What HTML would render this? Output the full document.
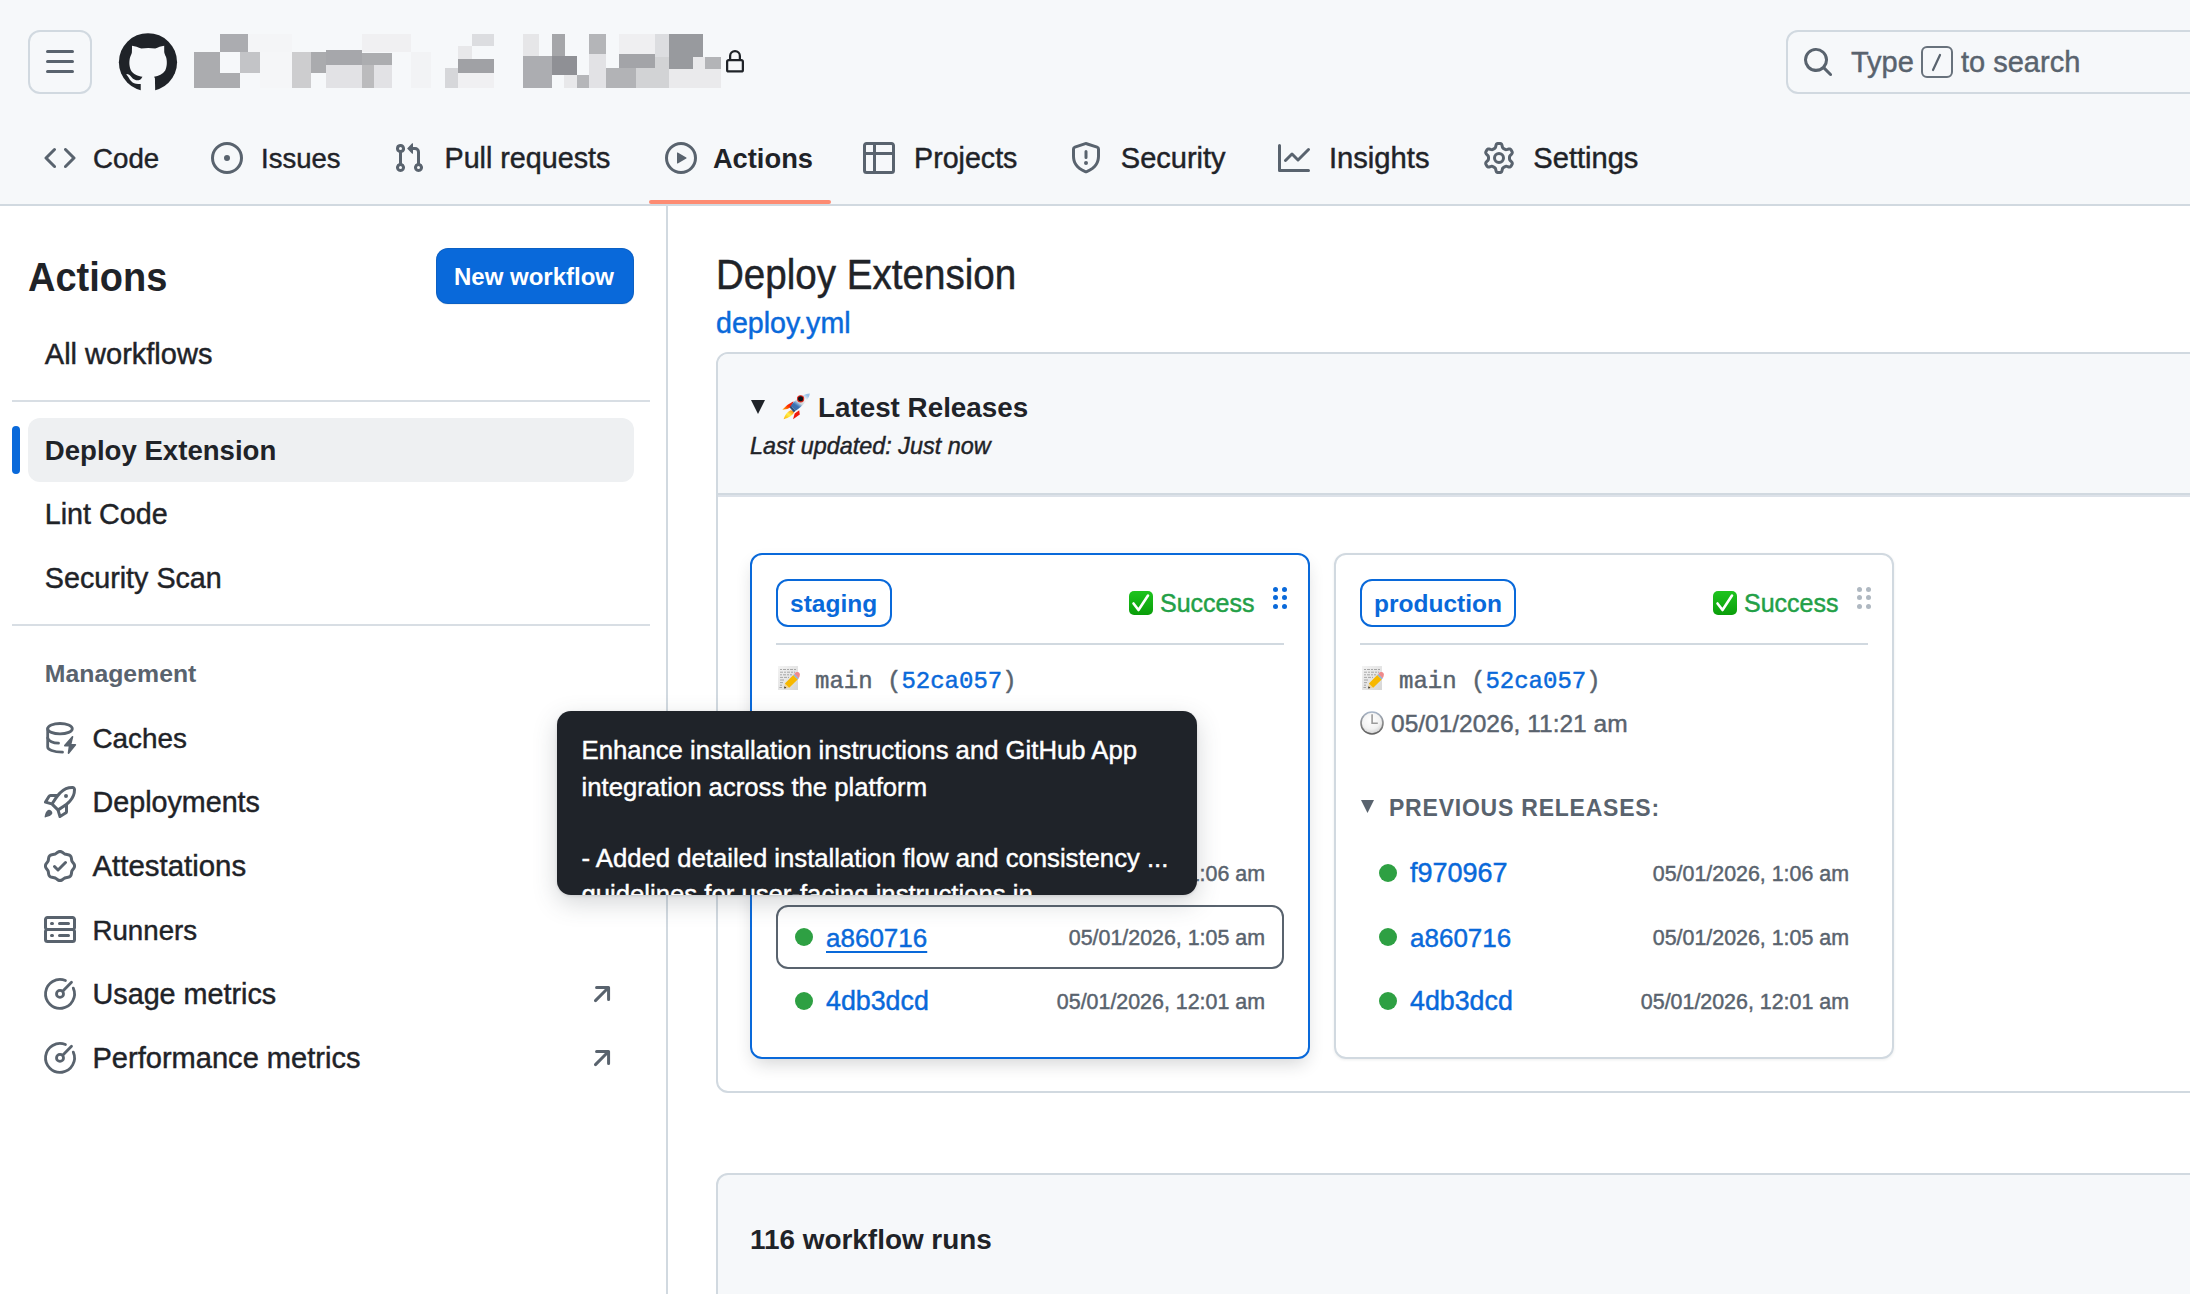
<!DOCTYPE html>
<html><head><meta charset="utf-8"><title>Actions</title>
<style>
html,body{margin:0;padding:0;}
body{width:2190px;height:1294px;overflow:hidden;position:relative;background:#fff;font-family:"Liberation Sans", sans-serif;}
.t{position:absolute;white-space:pre;-webkit-text-stroke:0.45px currentColor;}
svg{display:block}
</style></head><body>
<div style="position:absolute;left:0px;top:0px;width:2190px;height:204px;background:#f6f8fa"></div>
<div style="position:absolute;left:0px;top:204px;width:2190px;height:2px;background:#d1d9e0"></div>
<div style="position:absolute;left:28px;top:30px;width:60px;height:60px;border:2px solid #d1d9e0;border-radius:12px"></div>
<svg style="position:absolute;left:44px;top:46px" width="32" height="32" viewBox="0 0 16 16" fill="#59636e"><path d="M1 2.75A.75.75 0 0 1 1.75 2h12.5a.75.75 0 0 1 0 1.5H1.75A.75.75 0 0 1 1 2.75Zm0 5A.75.75 0 0 1 1.75 7h12.5a.75.75 0 0 1 0 1.5H1.75A.75.75 0 0 1 1 7.75ZM1.75 12h12.5a.75.75 0 0 1 0 1.5H1.75a.75.75 0 0 1 0-1.5Z"/></svg>
<svg style="position:absolute;left:110px;top:25.5px" width="80" height="75" viewBox="0 0 1380 1294">
<circle cx="655" cy="625" r="502" fill="#1f2328"/>
<path fill="#f6f8fa" d="M530 1140 L530 1000 C470 1000 420 995 390 975 C350 950 330 900 300 860 C290 845 280 835 285 828 C300 822 330 835 350 860 C380 900 410 930 450 935 C490 940 520 930 535 915 L560 875 C480 860 400 830 365 770 C330 710 325 600 350 530 C365 490 380 470 378 440 L380 340 C430 345 490 370 540 388 C620 375 700 375 780 388 C830 370 880 345 935 340 L935 440 C935 470 950 500 965 530 C990 600 985 710 950 770 C910 830 840 860 760 875 L775 900 L780 1140 Z"/>
</svg>
<div style="position:absolute;left:220px;top:34px;width:28px;height:18px;background:#abacb0"></div>
<div style="position:absolute;left:194px;top:52px;width:26px;height:36px;background:#abacaf"></div>
<div style="position:absolute;left:220px;top:73px;width:20px;height:15px;background:#abacaf"></div>
<div style="position:absolute;left:240px;top:52px;width:20px;height:21px;background:#c3c4c7"></div>
<div style="position:absolute;left:260px;top:52px;width:32px;height:36px;background:#f5f6f8"></div>
<div style="position:absolute;left:248px;top:34px;width:44px;height:18px;background:#f4f5f7"></div>
<div style="position:absolute;left:292px;top:52px;width:19px;height:36px;background:#cdcdcf"></div>
<div style="position:absolute;left:311px;top:52px;width:15px;height:21px;background:#aaabae"></div>
<div style="position:absolute;left:326px;top:50px;width:36px;height:15px;background:#a6a7ab"></div>
<div style="position:absolute;left:362px;top:53px;width:30px;height:12px;background:#acadb0"></div>
<div style="position:absolute;left:326px;top:65px;width:36px;height:23px;background:#e2e2e5"></div>
<div style="position:absolute;left:362px;top:65px;width:12px;height:23px;background:#bbbbbd"></div>
<div style="position:absolute;left:374px;top:65px;width:18px;height:23px;background:#e2e2e5"></div>
<div style="position:absolute;left:362px;top:34px;width:49px;height:18px;background:#f0f0f2"></div>
<div style="position:absolute;left:411px;top:52px;width:20px;height:36px;background:#f2f3f5"></div>
<div style="position:absolute;left:472px;top:34px;width:22px;height:12px;background:#dcdde0"></div>
<div style="position:absolute;left:458px;top:46px;width:14px;height:13px;background:#e8e8ea"></div>
<div style="position:absolute;left:458px;top:59px;width:36px;height:14px;background:#a0a1a5"></div>
<div style="position:absolute;left:445px;top:68px;width:13px;height:20px;background:#d6d7da"></div>
<div style="position:absolute;left:458px;top:73px;width:36px;height:15px;background:#f0f0f2"></div>
<div style="position:absolute;left:523px;top:34px;width:16px;height:22px;background:#e6e6e8"></div>
<div style="position:absolute;left:552px;top:34px;width:13px;height:22px;background:#a5a6a9"></div>
<div style="position:absolute;left:523px;top:56px;width:29px;height:32px;background:#acadb1"></div>
<div style="position:absolute;left:552px;top:56px;width:25px;height:19px;background:#8f9095"></div>
<div style="position:absolute;left:564px;top:75px;width:13px;height:13px;background:#e8e8ea"></div>
<div style="position:absolute;left:577px;top:75px;width:12px;height:13px;background:#b5b6b9"></div>
<div style="position:absolute;left:589px;top:34px;width:17px;height:20px;background:#b4b5b8"></div>
<div style="position:absolute;left:589px;top:54px;width:17px;height:34px;background:#e2e2e5"></div>
<div style="position:absolute;left:619px;top:34px;width:36px;height:20px;background:#efeff1"></div>
<div style="position:absolute;left:619px;top:54px;width:36px;height:14px;background:#a3a4a8"></div>
<div style="position:absolute;left:606px;top:68px;width:30px;height:20px;background:#b2b3b6"></div>
<div style="position:absolute;left:636px;top:68px;width:33px;height:20px;background:#d2d3d5"></div>
<div style="position:absolute;left:655px;top:57px;width:14px;height:11px;background:#d2d3d5"></div>
<div style="position:absolute;left:655px;top:34px;width:14px;height:23px;background:#dcdde0"></div>
<div style="position:absolute;left:669px;top:34px;width:34px;height:35px;background:#989a9e"></div>
<div style="position:absolute;left:693px;top:57px;width:12px;height:12px;background:#e9e9eb"></div>
<div style="position:absolute;left:705px;top:57px;width:16px;height:12px;background:#b3b4b7"></div>
<div style="position:absolute;left:669px;top:69px;width:52px;height:19px;background:#eaeaec"></div>
<svg style="position:absolute;left:723px;top:50px" width="24" height="24" viewBox="0 0 16 16" fill="#1f2328"><path d="M4 4a4 4 0 0 1 8 0v2h.25c.966 0 1.75.784 1.75 1.75v5.5A1.75 1.75 0 0 1 12.25 15h-8.5A1.75 1.75 0 0 1 2 13.25v-5.5C2 6.784 2.784 6 3.75 6H4Zm8.25 3.5h-8.5a.25.25 0 0 0-.25.25v5.5c0 .138.112.25.25.25h8.5a.25.25 0 0 0 .25-.25v-5.5a.25.25 0 0 0-.25-.25ZM10.5 6V4a2.5 2.5 0 1 0-5 0v2Z"/></svg>
<div style="position:absolute;left:1786px;top:30px;width:420px;height:60px;border:2px solid #d1d9e0;border-radius:12px;background:#f6f8fa"></div>
<svg style="position:absolute;left:1802px;top:46px" width="32" height="32" viewBox="0 0 16 16" fill="#59636e"><path d="M10.68 11.74a6 6 0 0 1-7.922-8.982 6 6 0 0 1 8.982 7.922l3.04 3.04a.749.749 0 0 1-.326 1.275.749.749 0 0 1-.734-.215ZM11.5 7a4.499 4.499 0 1 0-8.997 0A4.499 4.499 0 0 0 11.5 7Z"/></svg>
<div class="t" style="left:1851px;top:44.50px;font-size:29px;line-height:35px;font-weight:400;color:#59636e;font-style:normal;font-family:'Liberation Sans', sans-serif;">Type</div>
<div style="position:absolute;left:1921px;top:46px;width:28px;height:28px;border:2px solid #59636e;border-radius:6px;opacity:.9"></div>
<div class="t" style="left:1961px;top:44.50px;font-size:29px;line-height:35px;font-weight:400;color:#59636e;font-style:normal;font-family:'Liberation Sans', sans-serif;">to search</div>
<svg style="position:absolute;left:1921px;top:46px" width="32" height="32"><line x1="19" y1="9" x2="12" y2="24" stroke="#59636e" stroke-width="2.2" stroke-linecap="round"/></svg>
<svg style="position:absolute;left:44px;top:142px" width="32" height="32" viewBox="0 0 16 16" fill="#59636e"><path d="m11.28 3.22 4.25 4.25a.75.75 0 0 1 0 1.06l-4.25 4.25a.749.749 0 0 1-1.275-.326.749.749 0 0 1 .215-.734L13.94 8l-3.72-3.72a.749.749 0 0 1 .326-1.275.749.749 0 0 1 .734.215Zm-6.56 0a.751.751 0 0 1 1.042.018.751.751 0 0 1 .018 1.042L2.06 8l3.72 3.72a.749.749 0 0 1-.326 1.275.749.749 0 0 1-.734-.215L.47 8.53a.75.75 0 0 1 0-1.06Z"/></svg>
<div class="t" style="left:93.1px;top:141.50px;font-size:27.65px;line-height:34px;font-weight:400;color:#1f2328;font-style:normal;font-family:'Liberation Sans', sans-serif;">Code</div>
<svg style="position:absolute;left:211px;top:142px" width="32" height="32" viewBox="0 0 16 16" fill="#59636e"><path d="M8 9.5a1.5 1.5 0 1 0 0-3 1.5 1.5 0 0 0 0 3Z M8 0a8 8 0 1 1 0 16A8 8 0 0 1 8 0ZM1.5 8a6.5 6.5 0 1 0 13 0 6.5 6.5 0 0 0-13 0Z"/></svg>
<div class="t" style="left:261.0px;top:142.00px;font-size:27.5px;line-height:33px;font-weight:400;color:#1f2328;font-style:normal;font-family:'Liberation Sans', sans-serif;">Issues</div>
<svg style="position:absolute;left:393px;top:142px" width="32" height="32" viewBox="0 0 16 16" fill="#59636e"><path d="M1.5 3.25a2.25 2.25 0 1 1 3 2.122v5.256a2.251 2.251 0 1 1-1.5 0V5.372A2.25 2.25 0 0 1 1.5 3.25Zm5.677-.177L9.573.677A.25.25 0 0 1 10 .854V2.5h1A2.5 2.5 0 0 1 13.5 5v5.628a2.251 2.251 0 1 1-1.5 0V5a1 1 0 0 0-1-1h-1v1.646a.25.25 0 0 1-.427.177L7.177 3.427a.25.25 0 0 1 0-.354ZM3.75 2.5a.75.75 0 1 0 0 1.5.75.75 0 0 0 0-1.5Zm0 9.5a.75.75 0 1 0 0 1.5.75.75 0 0 0 0-1.5Zm8.25.75a.75.75 0 1 0 1.5 0 .75.75 0 0 0-1.5 0Z"/></svg>
<div class="t" style="left:444.5px;top:140.50px;font-size:28.7px;line-height:35px;font-weight:400;color:#1f2328;font-style:normal;font-family:'Liberation Sans', sans-serif;">Pull requests</div>
<svg style="position:absolute;left:665px;top:142px" width="32" height="32" viewBox="0 0 16 16" fill="#59636e"><path d="M8 0a8 8 0 1 1 0 16A8 8 0 0 1 8 0ZM1.5 8a6.5 6.5 0 1 0 13 0 6.5 6.5 0 0 0-13 0Zm4.879-2.773 4.264 2.559a.25.25 0 0 1 0 .428l-4.264 2.559A.25.25 0 0 1 6 10.559V5.442a.25.25 0 0 1 .379-.215Z"/></svg>
<div class="t" style="left:712.9px;top:142.00px;font-size:27.3px;line-height:33px;font-weight:700;color:#1f2328;font-style:normal;font-family:'Liberation Sans', sans-serif;-webkit-text-stroke:0;">Actions</div>
<svg style="position:absolute;left:863px;top:142px" width="32" height="32" viewBox="0 0 16 16" fill="#59636e"><path d="M0 1.75C0 .784.784 0 1.75 0h12.5C15.216 0 16 .784 16 1.75v12.5A1.75 1.75 0 0 1 14.25 16H1.75A1.75 1.75 0 0 1 0 14.25ZM6.5 6.5v8h7.75a.25.25 0 0 0 .25-.25V6.5Zm8-1.5V1.75a.25.25 0 0 0-.25-.25H6.5V5Zm-13 1.5v7.75c0 .138.112.25.25.25H5v-8ZM5 5V1.5H1.75a.25.25 0 0 0-.25.25V5Z"/></svg>
<div class="t" style="left:914.1px;top:140.50px;font-size:28.6px;line-height:35px;font-weight:400;color:#1f2328;font-style:normal;font-family:'Liberation Sans', sans-serif;">Projects</div>
<svg style="position:absolute;left:1070px;top:142px" width="32" height="32" viewBox="0 0 16 16" fill="#59636e"><path d="M7.467.133a1.748 1.748 0 0 1 1.066 0l5.25 1.68A1.75 1.75 0 0 1 15 3.48V7c0 1.566-.32 3.182-1.303 4.682-.983 1.498-2.585 2.813-5.032 3.855a1.697 1.697 0 0 1-1.33 0c-2.447-1.042-4.049-2.357-5.032-3.855C1.32 10.182 1 8.566 1 7V3.48a1.755 1.755 0 0 1 1.217-1.667Zm.61 1.429a.25.25 0 0 0-.153 0l-5.25 1.68a.25.25 0 0 0-.174.238V7c0 1.358.275 2.666 1.057 3.86.784 1.194 2.121 2.34 4.366 3.297a.196.196 0 0 0 .154 0c2.245-.956 3.582-2.104 4.366-3.298C13.225 9.666 13.5 8.36 13.5 7V3.48a.251.251 0 0 0-.174-.237l-5.25-1.68ZM8.75 4.75v3a.75.75 0 0 1-1.5 0v-3a.75.75 0 0 1 1.5 0ZM9 10.5a1 1 0 1 1-2 0 1 1 0 0 1 2 0Z"/></svg>
<div class="t" style="left:1120.8px;top:140.50px;font-size:29px;line-height:35px;font-weight:400;color:#1f2328;font-style:normal;font-family:'Liberation Sans', sans-serif;">Security</div>
<svg style="position:absolute;left:1278px;top:142px" width="32" height="32" viewBox="0 0 16 16" fill="#59636e"><path d="M1.5 1.75V13.5h13.75a.75.75 0 0 1 0 1.5H.75a.75.75 0 0 1-.75-.75V1.75a.75.75 0 0 1 1.5 0Zm14.28 2.53-5.25 5.25a.75.75 0 0 1-1.06 0L7 7.06 4.28 9.78a.751.751 0 0 1-1.042-.018.751.751 0 0 1-.018-1.042l3.25-3.25a.75.75 0 0 1 1.06 0L10 7.94l4.72-4.72a.751.751 0 0 1 1.042.018.751.751 0 0 1 .018 1.042Z"/></svg>
<div class="t" style="left:1328.9px;top:140.00px;font-size:29.2px;line-height:36px;font-weight:400;color:#1f2328;font-style:normal;font-family:'Liberation Sans', sans-serif;">Insights</div>
<svg style="position:absolute;left:1483px;top:142px" width="32" height="32" viewBox="0 0 16 16" fill="#59636e"><path d="M8 0a8.2 8.2 0 0 1 .701.031C9.444.095 9.99.645 10.16 1.29l.288 1.107c.018.066.079.158.212.224.231.114.454.243.668.386.123.082.233.09.299.071l1.103-.303c.644-.176 1.392.021 1.82.63.27.385.506.792.704 1.218.315.675.111 1.422-.364 1.891l-.814.806c-.049.048-.098.147-.088.294.016.257.016.515 0 .772-.01.147.038.246.088.294l.814.806c.475.469.679 1.216.364 1.891a7.977 7.977 0 0 1-.704 1.217c-.428.61-1.176.807-1.82.63l-1.102-.302c-.067-.019-.177-.011-.3.071a5.909 5.909 0 0 1-.668.386c-.133.066-.194.158-.211.224l-.29 1.106c-.168.646-.715 1.196-1.458 1.26a8.006 8.006 0 0 1-1.402 0c-.743-.064-1.289-.614-1.458-1.26l-.289-1.106c-.018-.066-.079-.158-.212-.224a5.738 5.738 0 0 1-.668-.386c-.123-.082-.233-.09-.299-.071l-1.103.303c-.644.176-1.392-.021-1.82-.63a8.12 8.12 0 0 1-.704-1.218c-.315-.675-.111-1.422.363-1.891l.815-.806c.05-.048.098-.147.088-.294a6.214 6.214 0 0 1 0-.772c.01-.147-.038-.246-.088-.294l-.815-.806C.635 6.045.431 5.298.746 4.623a7.92 7.92 0 0 1 .704-1.217c.428-.61 1.176-.807 1.82-.63l1.102.302c.067.019.177.011.3-.071.214-.143.437-.272.668-.386.133-.066.194-.158.211-.224l.29-1.106C6.009.645 6.556.095 7.299.03 7.53.01 7.764 0 8 0Zm-.571 1.525c-.036.003-.108.036-.137.146l-.289 1.105c-.147.561-.549.967-.998 1.189-.173.086-.34.183-.5.29-.417.278-.97.423-1.529.27l-1.103-.303c-.109-.03-.175.016-.195.045-.22.312-.412.644-.573.99-.014.031-.021.11.059.19l.815.806c.411.406.562.957.53 1.456a4.709 4.709 0 0 0 0 .582c.032.499-.119 1.05-.53 1.456l-.815.806c-.081.08-.073.159-.059.19.162.346.353.677.573.989.02.03.085.076.195.046l1.102-.303c.56-.153 1.113-.008 1.53.27.161.107.328.204.501.29.447.222.85.629.997 1.189l.289 1.105c.029.109.101.143.137.146a6.6 6.6 0 0 0 1.142 0c.036-.003.108-.036.137-.146l.289-1.105c.147-.561.549-.967.998-1.189.173-.086.34-.183.5-.29.417-.278.97-.423 1.529-.27l1.103.303c.109.029.175-.016.195-.045.22-.313.411-.644.573-.99.014-.031.021-.11-.059-.19l-.815-.806c-.411-.406-.562-.957-.53-1.456a4.709 4.709 0 0 0 0-.582c-.032-.499.119-1.05.53-1.456l.815-.806c.081-.08.073-.159.059-.19a6.464 6.464 0 0 0-.573-.989c-.02-.03-.085-.076-.195-.046l-1.102.303c-.56.153-1.113.008-1.53-.27a4.44 4.44 0 0 0-.501-.29c-.447-.222-.85-.629-.997-1.189l-.289-1.105c-.029-.11-.101-.143-.137-.146a6.6 6.6 0 0 0-1.142 0ZM11 8a3 3 0 1 1-6 0 3 3 0 0 1 6 0ZM9.5 8a1.5 1.5 0 1 0-3.001.001A1.5 1.5 0 0 0 9.5 8Z"/></svg>
<div class="t" style="left:1533.3px;top:140.50px;font-size:29.1px;line-height:35px;font-weight:400;color:#1f2328;font-style:normal;font-family:'Liberation Sans', sans-serif;">Settings</div>
<div style="position:absolute;left:649px;top:200px;width:182px;height:4px;background:#fd8c73;border-radius:2px"></div>
<div style="position:absolute;left:666px;top:206px;width:2px;height:1088px;background:#d1d9e0"></div>
<div class="t" style="left:28px;top:255.00px;font-size:38px;line-height:46px;font-weight:700;color:#1f2328;font-style:normal;font-family:'Liberation Sans', sans-serif;-webkit-text-stroke:0;transform:scaleY(1.09);transform-origin:0 36.00px;">Actions</div>
<div style="position:absolute;left:436px;top:248px;width:198px;height:56px;background:#0969da;border-radius:12px;box-shadow:inset 0 0 0 1px rgba(31,35,40,.12),0 1px 0 rgba(31,35,40,.06)"></div>
<div class="t" style="left:454px;top:261.50px;font-size:24px;line-height:29px;font-weight:700;color:#fff;font-style:normal;font-family:'Liberation Sans', sans-serif;-webkit-text-stroke:0;">New workflow</div>
<div class="t" style="left:44.8px;top:336.50px;font-size:29px;line-height:35px;font-weight:400;color:#1f2328;font-style:normal;font-family:'Liberation Sans', sans-serif;">All workflows</div>
<div style="position:absolute;left:12px;top:400px;width:638px;height:2px;background:#d8dee4"></div>
<div style="position:absolute;left:28px;top:418px;width:606px;height:64px;background:#eef0f2;border-radius:12px"></div>
<div style="position:absolute;left:12px;top:426px;width:8px;height:48px;background:#0969da;border-radius:4px"></div>
<div class="t" style="left:44.8px;top:434.00px;font-size:27.6px;line-height:34px;font-weight:700;color:#1f2328;font-style:normal;font-family:'Liberation Sans', sans-serif;-webkit-text-stroke:0;">Deploy Extension</div>
<div class="t" style="left:44.8px;top:497.00px;font-size:28.7px;line-height:35px;font-weight:400;color:#1f2328;font-style:normal;font-family:'Liberation Sans', sans-serif;">Lint Code</div>
<div class="t" style="left:44.8px;top:561.00px;font-size:28.7px;line-height:35px;font-weight:400;color:#1f2328;font-style:normal;font-family:'Liberation Sans', sans-serif;">Security Scan</div>
<div style="position:absolute;left:12px;top:624px;width:638px;height:2px;background:#d8dee4"></div>
<div class="t" style="left:44.8px;top:659.30px;font-size:24.8px;line-height:30px;font-weight:700;color:#59636e;font-style:normal;font-family:'Liberation Sans', sans-serif;-webkit-text-stroke:0;">Management</div>
<svg style="position:absolute;left:36px;top:712px" width="50" height="50" viewBox="0 0 50 50" fill="none" stroke="#59636e" stroke-width="2.8" stroke-linecap="round" stroke-linejoin="round"><ellipse cx="24" cy="16.7" rx="12.3" ry="5.2"/><path d="M11.7 16.7 V35 C11.7 37.5 17 40.2 26.5 40.2"/><path d="M11.7 26 C12.5 29 17 31.2 22.5 31.2"/><path d="M36.5 24.7 L28.8 33.6 L33.6 33.6 L32.5 41.2 L39.4 32.8 L34.5 32.8 Z" fill="#59636e" stroke-width="1.6"/></svg>
<div class="t" style="left:92.5px;top:721.50px;font-size:27.85px;line-height:34px;font-weight:400;color:#1f2328;font-style:normal;font-family:'Liberation Sans', sans-serif;">Caches</div>
<svg style="position:absolute;left:44px;top:786px" width="32" height="32" viewBox="0 0 16 16" fill="#59636e"><path d="M14.064 0h.186C15.216 0 16 .784 16 1.75v.186a8.752 8.752 0 0 1-2.564 6.186l-.458.459c-.314.314-.641.616-.979.904v3.207c0 .608-.315 1.172-.833 1.49l-2.774 1.707a.749.749 0 0 1-1.11-.418l-.954-3.102a1.214 1.214 0 0 1-.145-.125L3.754 9.816a1.218 1.218 0 0 1-.124-.145L.528 8.717a.749.749 0 0 1-.418-1.11l1.71-2.774A1.748 1.748 0 0 1 3.31 4h3.204c.288-.338.59-.665.904-.979l.459-.458A8.749 8.749 0 0 1 14.064 0ZM8.938 3.623h-.002l-.458.458c-.76.76-1.437 1.598-2.02 2.5l-1.5 2.317 2.143 2.143 2.317-1.5c.902-.583 1.74-1.26 2.499-2.02l.459-.458a7.25 7.25 0 0 0 2.123-5.127V1.75a.25.25 0 0 0-.25-.25h-.186a7.249 7.249 0 0 0-5.125 2.123ZM3.56 14.56c-.732.732-2.334 1.045-3.005 1.148a.234.234 0 0 1-.201-.064.234.234 0 0 1-.064-.201c.103-.671.416-2.273 1.15-3.003a1.502 1.502 0 1 1 2.12 2.12Zm6.94-3.935c-.088.06-.177.118-.266.175l-2.35 1.521.548 1.783 1.949-1.2a.25.25 0 0 0 .119-.213ZM3.678 8.116 5.2 5.766c.058-.09.117-.178.176-.266H3.309a.25.25 0 0 0-.213.119l-1.2 1.95ZM12 5a1 1 0 1 1-2 0 1 1 0 0 1 2 0Z"/></svg>
<div class="t" style="left:92.5px;top:784.50px;font-size:28.69px;line-height:35px;font-weight:400;color:#1f2328;font-style:normal;font-family:'Liberation Sans', sans-serif;">Deployments</div>
<svg style="position:absolute;left:44px;top:850px" width="32" height="32" viewBox="0 0 16 16" fill="#59636e"><path d="m9.585.52.929.68c.153.112.331.186.518.215l1.138.175a2.678 2.678 0 0 1 2.24 2.24l.174 1.139c.029.187.103.365.215.518l.68.928a2.677 2.677 0 0 1 0 3.17l-.68.928a1.174 1.174 0 0 0-.215.518l-.175 1.138a2.678 2.678 0 0 1-2.241 2.241l-1.138.175a1.17 1.17 0 0 0-.518.215l-.928.68a2.677 2.677 0 0 1-3.17 0l-.928-.68a1.174 1.174 0 0 0-.518-.215L3.83 14.41a2.679 2.679 0 0 1-2.24-2.24l-.175-1.138a1.17 1.17 0 0 0-.215-.518l-.68-.928a2.677 2.677 0 0 1 0-3.17l.68-.928c.112-.153.186-.331.215-.518l.175-1.14a2.678 2.678 0 0 1 2.24-2.24l1.139-.175c.187-.029.365-.103.518-.215l.928-.68a2.677 2.677 0 0 1 3.17 0ZM7.303 1.728l-.927.68a2.67 2.67 0 0 1-1.18.489l-1.137.174a1.179 1.179 0 0 0-.987.987l-.174 1.136a2.677 2.677 0 0 1-.489 1.18l-.68.928a1.18 1.18 0 0 0 0 1.394l.68.927c.256.348.424.753.489 1.18l.174 1.137c.078.509.478.909.987.987l1.136.174a2.67 2.67 0 0 1 1.18.489l.928.68c.414.305.979.305 1.394 0l.927-.68a2.67 2.67 0 0 1 1.18-.489l1.137-.174a1.18 1.18 0 0 0 .987-.987l.174-1.136a2.67 2.67 0 0 1 .489-1.18l.68-.928a1.176 1.176 0 0 0 0-1.394l-.68-.927a2.686 2.686 0 0 1-.489-1.18l-.174-1.137a1.179 1.179 0 0 0-.987-.987l-1.136-.174a2.677 2.677 0 0 1-1.18-.489l-.928-.68a1.18 1.18 0 0 0-1.394 0ZM11.28 6.78l-3.75 3.75a.75.75 0 0 1-1.06 0L4.72 8.78a.751.751 0 0 1 .018-1.042.751.751 0 0 1 1.042-.018l1.22 1.22 3.22-3.22a.751.751 0 0 1 1.042.018.751.751 0 0 1 .018 1.042Z"/></svg>
<div class="t" style="left:92.5px;top:847.50px;font-size:29.41px;line-height:36px;font-weight:400;color:#1f2328;font-style:normal;font-family:'Liberation Sans', sans-serif;">Attestations</div>
<svg style="position:absolute;left:44px;top:914px" width="32" height="32" viewBox="0 0 16 16" fill="#59636e"><path d="M1.75 1h12.5c.966 0 1.75.784 1.75 1.75v4c0 .372-.116.717-.314 1 .198.283.314.628.314 1v4a1.75 1.75 0 0 1-1.75 1.75H1.75A1.75 1.75 0 0 1 0 12.75v-4c0-.358.109-.707.314-1a1.739 1.739 0 0 1-.314-1v-4C0 1.784.784 1 1.75 1ZM1.5 2.75v4c0 .138.112.25.25.25h12.5a.25.25 0 0 0 .25-.25v-4a.25.25 0 0 0-.25-.25H1.75a.25.25 0 0 0-.25.25Zm.25 5.75a.25.25 0 0 0-.25.25v4c0 .138.112.25.25.25h12.5a.25.25 0 0 0 .25-.25v-4a.25.25 0 0 0-.25-.25ZM7 4.75A.75.75 0 0 1 7.75 4h4.5a.75.75 0 0 1 0 1.5h-4.5A.75.75 0 0 1 7 4.75ZM7.75 10h4.5a.75.75 0 0 1 0 1.5h-4.5a.75.75 0 0 1 0-1.5ZM3 4.75A.75.75 0 0 1 3.75 4h.5a.75.75 0 0 1 0 1.5h-.5A.75.75 0 0 1 3 4.75ZM3.75 10h.5a.75.75 0 0 1 0 1.5h-.5a.75.75 0 0 1 0-1.5Z"/></svg>
<div class="t" style="left:92.5px;top:913.50px;font-size:27.68px;line-height:34px;font-weight:400;color:#1f2328;font-style:normal;font-family:'Liberation Sans', sans-serif;">Runners</div>
<svg style="position:absolute;left:36px;top:968px" width="50" height="50" viewBox="0 0 50 50" fill="none" stroke="#59636e" stroke-width="2.8" stroke-linecap="round"><path d="M29.45 12.47 A14.5 14.5 0 1 0 37.29 20.1"/><circle cx="24" cy="25.9" r="3.5"/><path d="M26.7 23.2 L35.5 14.3"/></svg>
<div class="t" style="left:92.5px;top:976.50px;font-size:28.76px;line-height:35px;font-weight:400;color:#1f2328;font-style:normal;font-family:'Liberation Sans', sans-serif;">Usage metrics</div>
<svg style="position:absolute;left:36px;top:1032px" width="50" height="50" viewBox="0 0 50 50" fill="none" stroke="#59636e" stroke-width="2.8" stroke-linecap="round"><path d="M29.45 12.47 A14.5 14.5 0 1 0 37.29 20.1"/><circle cx="24" cy="25.9" r="3.5"/><path d="M26.7 23.2 L35.5 14.3"/></svg>
<div class="t" style="left:92.5px;top:1040.50px;font-size:29.06px;line-height:35px;font-weight:400;color:#1f2328;font-style:normal;font-family:'Liberation Sans', sans-serif;">Performance metrics</div>
<svg style="position:absolute;left:586px;top:978px" width="32" height="32" viewBox="0 0 16 16" fill="#59636e"><path d="M4.53 4.75A.75.75 0 0 1 5.28 4h6.01a.75.75 0 0 1 .75.75v6.01a.75.75 0 0 1-1.5 0v-4.2l-5.26 5.261a.749.749 0 0 1-1.275-.326.749.749 0 0 1 .215-.734L9.48 5.5h-4.2a.75.75 0 0 1-.75-.75Z"/></svg>
<svg style="position:absolute;left:586px;top:1042px" width="32" height="32" viewBox="0 0 16 16" fill="#59636e"><path d="M4.53 4.75A.75.75 0 0 1 5.28 4h6.01a.75.75 0 0 1 .75.75v6.01a.75.75 0 0 1-1.5 0v-4.2l-5.26 5.261a.749.749 0 0 1-1.275-.326.749.749 0 0 1 .215-.734L9.48 5.5h-4.2a.75.75 0 0 1-.75-.75Z"/></svg>
<div class="t" style="left:716px;top:252.00px;font-size:38.6px;line-height:47px;font-weight:400;color:#1f2328;font-style:normal;font-family:'Liberation Sans', sans-serif;transform:scaleY(1.1);transform-origin:0 37.00px;">Deploy Extension</div>
<div class="t" style="left:716px;top:305.50px;font-size:28.6px;line-height:35px;font-weight:400;color:#0969da;font-style:normal;font-family:'Liberation Sans', sans-serif;">deploy.yml</div>
<div style="position:absolute;left:716px;top:352px;width:1600px;height:737px;border:2px solid #d1d9e0;border-radius:12px;background:#fff"></div>
<div style="position:absolute;left:718px;top:354px;width:1600px;height:139px;background:#f6f8fa;border-top-left-radius:10px"></div>
<div style="position:absolute;left:718px;top:493px;width:1600px;height:2px;background:#d1d9e0"></div>
<div style="position:absolute;left:718px;top:495px;width:1600px;height:2px;background:#dde2e9"></div>
<svg style="position:absolute;left:751px;top:400px" width="14" height="14"><path d="M0 0H14L7 14Z" fill="#1f2328"/></svg>
<svg style="position:absolute;left:782px;top:393px" width="28" height="27" viewBox="0 0 28 27"><defs><linearGradient id="rb" x1="0.85" y1="0.1" x2="0.35" y2="0.75"><stop offset="0" stop-color="#9cc4ea"/><stop offset="0.3" stop-color="#f6f8f9"/><stop offset="0.72" stop-color="#ccd5da"/><stop offset="0.9" stop-color="#5a8fc8"/><stop offset="1" stop-color="#3a70b0"/></linearGradient><linearGradient id="rf" x1="0" y1="1" x2="1" y2="0"><stop offset="0" stop-color="#ffb000"/><stop offset="0.5" stop-color="#fff04a"/><stop offset="1" stop-color="#ff6a00"/></linearGradient><linearGradient id="rr" x1="0" y1="1" x2="1" y2="0"><stop offset="0" stop-color="#ffb000"/><stop offset="0.5" stop-color="#ff2a00"/><stop offset="1" stop-color="#e01010"/></linearGradient></defs><path d="M0.3 16.8 L5.3 12.0 L11.6 8.2 L9.6 13.8 L5.3 15.9 Z" fill="url(#rr)"/><path d="M11 26.2 L12.7 20.6 L17.2 17.3 L17.8 21.6 Z" fill="#f01a0a"/><path d="M1.6 26.2 C3 22 5 19 8.6 17.3 L12.8 18.3 C11 22 7 25 1.6 26.2 Z" fill="url(#rf)"/><path d="M27.9 0.6 C22 0.8 14 5.5 8.8 12.8 L13.6 17.8 C20.5 13.2 27 6.5 27.9 0.6 Z" fill="url(#rb)"/><path d="M8.8 12.8 L13.6 17.8 L11.8 19.2 L7.6 14.6 Z" fill="#2a4f7a"/><circle cx="18.6" cy="5.8" r="3.1" fill="#0c1418" stroke="#e0281e" stroke-width="1.1"/></svg>
<div class="t" style="left:818px;top:391.00px;font-size:27.8px;line-height:34px;font-weight:700;color:#1f2328;font-style:normal;font-family:'Liberation Sans', sans-serif;-webkit-text-stroke:0;">Latest Releases</div>
<div class="t" style="left:750px;top:431.50px;font-size:23.4px;line-height:29px;font-weight:400;color:#1f2328;font-style:italic;font-family:'Liberation Sans', sans-serif;">Last updated: Just now</div>
<div style="position:absolute;left:750px;top:553px;width:556px;height:502px;border:2px solid #0969da;border-radius:12px;box-shadow:0 8px 18px -4px rgba(31,35,40,.2)"></div>
<div style="position:absolute;left:776px;top:579px;width:112px;height:44px;border:2px solid #0969da;border-radius:12px"></div>
<div class="t" style="left:790px;top:588.50px;font-size:24.5px;line-height:30px;font-weight:700;color:#0969da;font-style:normal;font-family:'Liberation Sans', sans-serif;-webkit-text-stroke:0;">staging</div>
<svg style="position:absolute;left:1129px;top:591px" width="24" height="24" viewBox="0 0 24 24"><defs><linearGradient id="g750" x1="0" y1="0" x2="0" y2="1"><stop offset="0" stop-color="#1fc41f"/><stop offset="1" stop-color="#0a9e0a"/></linearGradient></defs><rect x="0" y="0" width="24" height="24" rx="5" fill="url(#g750)"/><path d="M4.5 12.5 L9.5 19 L19 4.5" fill="none" stroke="#fff" stroke-width="2.6" stroke-linejoin="round" stroke-linecap="round"/></svg>
<div class="t" style="left:1160px;top:588.00px;font-size:25px;line-height:30px;font-weight:400;color:#23a047;font-style:normal;font-family:'Liberation Sans', sans-serif;">Success</div>
<div style="position:absolute;left:1273.0px;top:586.7px;width:5px;height:5px;border-radius:50%;background:#0969da"></div>
<div style="position:absolute;left:1273.0px;top:595.2px;width:5px;height:5px;border-radius:50%;background:#0969da"></div>
<div style="position:absolute;left:1273.0px;top:603.8px;width:5px;height:5px;border-radius:50%;background:#0969da"></div>
<div style="position:absolute;left:1281.5px;top:586.7px;width:5px;height:5px;border-radius:50%;background:#0969da"></div>
<div style="position:absolute;left:1281.5px;top:595.2px;width:5px;height:5px;border-radius:50%;background:#0969da"></div>
<div style="position:absolute;left:1281.5px;top:603.8px;width:5px;height:5px;border-radius:50%;background:#0969da"></div>
<div style="position:absolute;left:776px;top:643px;width:508px;height:2px;background:#d1d9e0"></div>
<div style="position:absolute;left:1334px;top:553px;width:556px;height:502px;border:2px solid #d1d9e0;border-radius:12px;box-shadow:0 1px 3px rgba(31,35,40,.08)"></div>
<div style="position:absolute;left:1360px;top:579px;width:152px;height:44px;border:2px solid #0969da;border-radius:12px"></div>
<div class="t" style="left:1374px;top:588.50px;font-size:24.5px;line-height:30px;font-weight:700;color:#0969da;font-style:normal;font-family:'Liberation Sans', sans-serif;-webkit-text-stroke:0;">production</div>
<svg style="position:absolute;left:1713px;top:591px" width="24" height="24" viewBox="0 0 24 24"><defs><linearGradient id="g1334" x1="0" y1="0" x2="0" y2="1"><stop offset="0" stop-color="#1fc41f"/><stop offset="1" stop-color="#0a9e0a"/></linearGradient></defs><rect x="0" y="0" width="24" height="24" rx="5" fill="url(#g1334)"/><path d="M4.5 12.5 L9.5 19 L19 4.5" fill="none" stroke="#fff" stroke-width="2.6" stroke-linejoin="round" stroke-linecap="round"/></svg>
<div class="t" style="left:1744px;top:588.00px;font-size:25px;line-height:30px;font-weight:400;color:#23a047;font-style:normal;font-family:'Liberation Sans', sans-serif;">Success</div>
<div style="position:absolute;left:1857.0px;top:586.7px;width:5px;height:5px;border-radius:50%;background:#afb8c1"></div>
<div style="position:absolute;left:1857.0px;top:595.2px;width:5px;height:5px;border-radius:50%;background:#afb8c1"></div>
<div style="position:absolute;left:1857.0px;top:603.8px;width:5px;height:5px;border-radius:50%;background:#afb8c1"></div>
<div style="position:absolute;left:1865.5px;top:586.7px;width:5px;height:5px;border-radius:50%;background:#afb8c1"></div>
<div style="position:absolute;left:1865.5px;top:595.2px;width:5px;height:5px;border-radius:50%;background:#afb8c1"></div>
<div style="position:absolute;left:1865.5px;top:603.8px;width:5px;height:5px;border-radius:50%;background:#afb8c1"></div>
<div style="position:absolute;left:1360px;top:643px;width:508px;height:2px;background:#d1d9e0"></div>
<svg style="position:absolute;left:778px;top:666px" width="22" height="24" viewBox="0 0 22 24"><defs><linearGradient id="mp778" x1="0" y1="0" x2="1" y2="1"><stop offset="0" stop-color="#f4f4f4"/><stop offset="1" stop-color="#d6d6d6"/></linearGradient></defs><rect x="0" y="0" width="20" height="24" fill="url(#mp778)"/><g stroke="#6a6a6a" stroke-width="0.7" opacity="0.75"><line x1="2" y1="3.5" x2="18" y2="3.5" stroke-dasharray="2 1 3 1"/><line x1="2" y1="6.2" x2="17" y2="6.2" stroke-dasharray="3 1 2 1"/><line x1="2" y1="8.8" x2="14" y2="8.8" stroke-dasharray="2 1 3 1"/><line x1="2" y1="11.4" x2="11" y2="11.4" stroke-dasharray="3 1"/><line x1="2" y1="14" x2="6" y2="14"/><line x1="2" y1="16.6" x2="5" y2="16.6"/><line x1="2" y1="19.2" x2="4" y2="19.2"/><line x1="1.5" y1="21.5" x2="4" y2="21.5"/></g><path d="M6.2 22.4 L6.9 17.5 L11.2 21.8 Z" fill="#f0d49a"/><path d="M6.2 22.4 L6.5 20.2 L8.4 22.0 Z" fill="#222"/><path d="M6.9 17.5 L15.3 9.0 L19.7 13.4 L11.2 21.8 Z" fill="#f7b800"/><path d="M15.3 9.0 L16.4 7.9 L20.8 12.3 L19.7 13.4 Z" fill="#8fb4d6"/><path d="M16.4 7.9 C17.5 5.8 20.5 5.5 21.6 7.2 C22.2 9 21.6 10.5 20.8 12.3 Z" fill="#ef8a8a"/></svg>
<div class="t" style="left:815px;top:667.00px;font-size:24px;line-height:29px;font-weight:400;color:#59636e;font-style:normal;font-family:'Liberation Mono', monospace;">main (</div>
<div class="t" style="left:901.4px;top:667.00px;font-size:24px;line-height:29px;font-weight:400;color:#0969da;font-style:normal;font-family:'Liberation Mono', monospace;">52ca057</div>
<div class="t" style="left:1002.2px;top:667.00px;font-size:24px;line-height:29px;font-weight:400;color:#59636e;font-style:normal;font-family:'Liberation Mono', monospace;">)</div>
<svg style="position:absolute;left:1362px;top:666px" width="22" height="24" viewBox="0 0 22 24"><defs><linearGradient id="mp1362" x1="0" y1="0" x2="1" y2="1"><stop offset="0" stop-color="#f4f4f4"/><stop offset="1" stop-color="#d6d6d6"/></linearGradient></defs><rect x="0" y="0" width="20" height="24" fill="url(#mp1362)"/><g stroke="#6a6a6a" stroke-width="0.7" opacity="0.75"><line x1="2" y1="3.5" x2="18" y2="3.5" stroke-dasharray="2 1 3 1"/><line x1="2" y1="6.2" x2="17" y2="6.2" stroke-dasharray="3 1 2 1"/><line x1="2" y1="8.8" x2="14" y2="8.8" stroke-dasharray="2 1 3 1"/><line x1="2" y1="11.4" x2="11" y2="11.4" stroke-dasharray="3 1"/><line x1="2" y1="14" x2="6" y2="14"/><line x1="2" y1="16.6" x2="5" y2="16.6"/><line x1="2" y1="19.2" x2="4" y2="19.2"/><line x1="1.5" y1="21.5" x2="4" y2="21.5"/></g><path d="M6.2 22.4 L6.9 17.5 L11.2 21.8 Z" fill="#f0d49a"/><path d="M6.2 22.4 L6.5 20.2 L8.4 22.0 Z" fill="#222"/><path d="M6.9 17.5 L15.3 9.0 L19.7 13.4 L11.2 21.8 Z" fill="#f7b800"/><path d="M15.3 9.0 L16.4 7.9 L20.8 12.3 L19.7 13.4 Z" fill="#8fb4d6"/><path d="M16.4 7.9 C17.5 5.8 20.5 5.5 21.6 7.2 C22.2 9 21.6 10.5 20.8 12.3 Z" fill="#ef8a8a"/></svg>
<div class="t" style="left:1399px;top:667.00px;font-size:24px;line-height:29px;font-weight:400;color:#59636e;font-style:normal;font-family:'Liberation Mono', monospace;">main (</div>
<div class="t" style="left:1485.4px;top:667.00px;font-size:24px;line-height:29px;font-weight:400;color:#0969da;font-style:normal;font-family:'Liberation Mono', monospace;">52ca057</div>
<div class="t" style="left:1586.2px;top:667.00px;font-size:24px;line-height:29px;font-weight:400;color:#59636e;font-style:normal;font-family:'Liberation Mono', monospace;">)</div>
<svg style="position:absolute;left:1360px;top:711px" width="24" height="24" viewBox="0 0 24 24"><defs><linearGradient id="cr" x1="0" y1="0" x2="0" y2="1"><stop offset="0" stop-color="#a9b8cc"/><stop offset="0.5" stop-color="#8a8a8a"/><stop offset="1" stop-color="#5e5e5e"/></linearGradient><radialGradient id="cg" cx="0.45" cy="0.35" r="0.75"><stop offset="0" stop-color="#ffffff"/><stop offset="0.6" stop-color="#f2f2f2"/><stop offset="1" stop-color="#c8c8c8"/></radialGradient></defs><circle cx="12" cy="12" r="11.8" fill="url(#cr)"/><circle cx="12" cy="12" r="10.2" fill="url(#cg)"/><path d="M12.1 3.3 V12.3 H17.8" fill="none" stroke="#9b9b9b" stroke-width="1.6"/></svg>
<div class="t" style="left:1391px;top:708.50px;font-size:24.5px;line-height:30px;font-weight:400;color:#59636e;font-style:normal;font-family:'Liberation Sans', sans-serif;">05/01/2026, 11:21 am</div>
<svg style="position:absolute;left:1361px;top:800px" width="14" height="14"><path d="M0 0H13L6.5 13Z" fill="#59636e"/></svg>
<div class="t" style="left:1389px;top:794.00px;font-size:23px;line-height:28px;font-weight:700;color:#59636e;font-style:normal;font-family:'Liberation Sans', sans-serif;letter-spacing:0.78px;-webkit-text-stroke:0;transform:scaleY(1.08);transform-origin:0 22.00px;">PREVIOUS RELEASES:</div>
<div style="position:absolute;left:795px;top:864px;width:18px;height:18px;border-radius:50%;background:#2ea043"></div>
<div class="t" style="left:826px;top:857.00px;font-size:27px;line-height:33px;font-weight:400;color:#0969da;font-style:normal;font-family:'Liberation Sans', sans-serif;">f970967</div>
<div class="t" style="right:925px;text-align:right;top:860.70px;font-size:21.4px;line-height:26px;font-weight:400;color:#59636e;font-style:normal;font-family:'Liberation Sans', sans-serif;">05/01/2026, 1:06 am</div>
<div style="position:absolute;left:1379px;top:864px;width:18px;height:18px;border-radius:50%;background:#2ea043"></div>
<div class="t" style="left:1410px;top:857.00px;font-size:27px;line-height:33px;font-weight:400;color:#0969da;font-style:normal;font-family:'Liberation Sans', sans-serif;">f970967</div>
<div class="t" style="right:341px;text-align:right;top:860.70px;font-size:21.4px;line-height:26px;font-weight:400;color:#59636e;font-style:normal;font-family:'Liberation Sans', sans-serif;">05/01/2026, 1:06 am</div>
<div style="position:absolute;left:776px;top:905px;width:504px;height:60px;border:2px solid #59636e;border-radius:12px"></div>
<div style="position:absolute;left:795px;top:928px;width:18px;height:18px;border-radius:50%;background:#2ea043"></div>
<div class="t" style="left:826px;top:921.50px;font-size:26px;line-height:32px;font-weight:400;color:#0969da;font-style:normal;font-family:'Liberation Sans', sans-serif;text-decoration:underline;text-decoration-thickness:2px;text-underline-offset:4px;">a860716</div>
<div class="t" style="right:925px;text-align:right;top:924.70px;font-size:21.4px;line-height:26px;font-weight:400;color:#59636e;font-style:normal;font-family:'Liberation Sans', sans-serif;">05/01/2026, 1:05 am</div>
<div style="position:absolute;left:1379px;top:928px;width:18px;height:18px;border-radius:50%;background:#2ea043"></div>
<div class="t" style="left:1410px;top:921.50px;font-size:26px;line-height:32px;font-weight:400;color:#0969da;font-style:normal;font-family:'Liberation Sans', sans-serif;">a860716</div>
<div class="t" style="right:341px;text-align:right;top:924.70px;font-size:21.4px;line-height:26px;font-weight:400;color:#59636e;font-style:normal;font-family:'Liberation Sans', sans-serif;">05/01/2026, 1:05 am</div>
<div style="position:absolute;left:795px;top:992px;width:18px;height:18px;border-radius:50%;background:#2ea043"></div>
<div class="t" style="left:826px;top:985.00px;font-size:26.8px;line-height:33px;font-weight:400;color:#0969da;font-style:normal;font-family:'Liberation Sans', sans-serif;">4db3dcd</div>
<div class="t" style="right:925px;text-align:right;top:988.70px;font-size:21.4px;line-height:26px;font-weight:400;color:#59636e;font-style:normal;font-family:'Liberation Sans', sans-serif;">05/01/2026, 12:01 am</div>
<div style="position:absolute;left:1379px;top:992px;width:18px;height:18px;border-radius:50%;background:#2ea043"></div>
<div class="t" style="left:1410px;top:985.00px;font-size:26.8px;line-height:33px;font-weight:400;color:#0969da;font-style:normal;font-family:'Liberation Sans', sans-serif;">4db3dcd</div>
<div class="t" style="right:341px;text-align:right;top:988.70px;font-size:21.4px;line-height:26px;font-weight:400;color:#59636e;font-style:normal;font-family:'Liberation Sans', sans-serif;">05/01/2026, 12:01 am</div>
<div style="position:absolute;left:716px;top:1173px;width:1600px;height:400px;border:2px solid #d1d9e0;border-radius:12px;background:#f6f8fa"></div>
<div class="t" style="left:750px;top:1223.00px;font-size:27.9px;line-height:34px;font-weight:700;color:#1f2328;font-style:normal;font-family:'Liberation Sans', sans-serif;-webkit-text-stroke:0;">116 workflow runs</div>
<div style="position:absolute;left:557px;top:711px;width:640px;height:184px;background:#1f2329;border-radius:14px;box-shadow:0 8px 24px rgba(66,74,83,.22),0 1px 3px rgba(31,35,40,.12);overflow:hidden">
<div class="t" style="left:24.5px;top:24.10px;font-size:25.7px;line-height:31px;font-weight:400;color:#ffffff;font-style:normal;font-family:'Liberation Sans', sans-serif;">Enhance installation instructions and GitHub App</div>
<div class="t" style="left:24.5px;top:60.70px;font-size:25.7px;line-height:31px;font-weight:400;color:#ffffff;font-style:normal;font-family:'Liberation Sans', sans-serif;">integration across the platform</div>
<div class="t" style="left:24.5px;top:132.00px;font-size:25.7px;line-height:31px;font-weight:400;color:#ffffff;font-style:normal;font-family:'Liberation Sans', sans-serif;">- Added detailed installation flow and consistency ...</div>
<div class="t" style="left:24.5px;top:168.20px;font-size:25.7px;line-height:31px;font-weight:400;color:#ffffff;font-style:normal;font-family:'Liberation Sans', sans-serif;">guidelines for user-facing instructions in</div>
</div>
</body></html>
